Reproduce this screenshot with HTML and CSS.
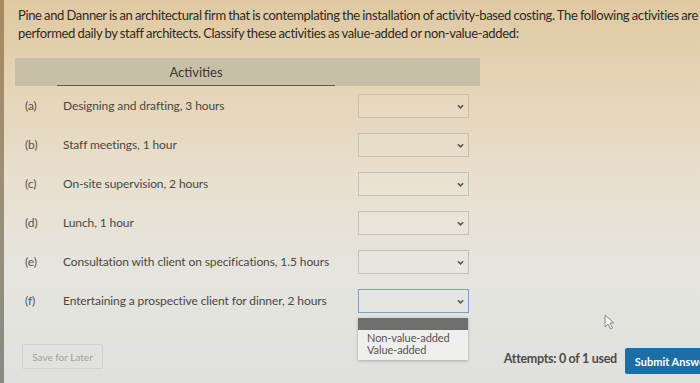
FILE: index.html
```html
<!DOCTYPE html>
<html lang="en">
<head>
    <meta charset="UTF-8">
    <meta name="viewport" content="width=device-width, initial-scale=1.0">
    <title>Activity-based costing</title>
    <link rel="stylesheet" href="styles.css">
</head>
<body>
    <div class="page">
        <p class="question">Pine and Danner is an architectural firm that is contemplating the installation of activity-based costing. The following activities are performed daily by staff architects. Classify these activities as value-added or non-value-added:</p>

        <div class="activities">
            <div class="head">
                <span class="head-title">Activities</span>
            </div>
            <div class="row">
                <span class="tag">(a)</span>
                <span class="desc">Designing and drafting, 3 hours</span>
                <div class="pick"><svg viewBox="0 0 8 5" class="chev"><polyline points="1,1 4,4 7,1"/></svg></div>
            </div>
            <div class="row">
                <span class="tag">(b)</span>
                <span class="desc">Staff meetings, 1 hour</span>
                <div class="pick"><svg viewBox="0 0 8 5" class="chev"><polyline points="1,1 4,4 7,1"/></svg></div>
            </div>
            <div class="row">
                <span class="tag">(c)</span>
                <span class="desc">On-site supervision, 2 hours</span>
                <div class="pick"><svg viewBox="0 0 8 5" class="chev"><polyline points="1,1 4,4 7,1"/></svg></div>
            </div>
            <div class="row">
                <span class="tag">(d)</span>
                <span class="desc">Lunch, 1 hour</span>
                <div class="pick"><svg viewBox="0 0 8 5" class="chev"><polyline points="1,1 4,4 7,1"/></svg></div>
            </div>
            <div class="row">
                <span class="tag">(e)</span>
                <span class="desc">Consultation with client on specifications, 1.5 hours</span>
                <div class="pick"><svg viewBox="0 0 8 5" class="chev"><polyline points="1,1 4,4 7,1"/></svg></div>
            </div>
            <div class="row">
                <span class="tag">(f)</span>
                <span class="desc">Entertaining a prospective client for dinner, 2 hours</span>
                <div class="pick open">
                    <svg viewBox="0 0 8 5" class="chev"><polyline points="1,1 4,4 7,1"/></svg>
                    <ul class="menu">
                        <li class="menu-blank"></li>
                        <li>Non-value-added</li>
                        <li>Value-added</li>
                    </ul>
                </div>
            </div>
        </div>

        <div class="footer">
            <button class="save-btn">Save for Later</button>
            <svg class="cursor" viewBox="0 0 11 16"><path d="M1 1 L1 13 L4 10 L6.5 15 L8.5 14 L6 9 L10 9 Z"/></svg>
            <span class="attempts">Attempts: 0 of 1 used</span>
            <button class="submit-btn">Submit Answer</button>
        </div>
    </div>
</body>
</html>
```

FILE: styles.css
```css
html, body {
    margin: 0;
    height: 100%;
}
body {
    font-family: Lato, "Open Sans", sans-serif;
    overflow: hidden;
    background: linear-gradient(180deg, #e0c9a2 0%, #e6d5b8 25%, #e8e0cf 48%, #e5e4df 72%, #e0e1dd 100%);
}
.page {
    height: 383px;
    border-left: 4px solid;
    border-image: linear-gradient(180deg, #a88a5e, #9c8f78 50%, #858b84) 1;
    box-sizing: border-box;
}
.question {
    margin: 0;
    padding: 6px 0 0 14px;
    font-size: 13px;
    line-height: 18px;
    letter-spacing: -0.35px;
    word-spacing: -0.5px;
    color: #2e2a24;
    width: 700px;
}
.activities {
    margin: 16px 0 0 11px;
    width: 465px;
}
.head {
    height: 28px;
    background: #c8c0a6;
    display: flex;
    align-items: flex-end;
}
.head-title {
    margin-left: 42px;
    width: 278px;
    height: 27px;
    line-height: 26px;
    text-align: center;
    font-size: 13px;
    color: #3a3732;
    border-bottom: 1px solid #5c5a52;
    box-sizing: border-box;
}
.row {
    height: 39px;
    display: grid;
    grid-template-columns: 38px 295px 111px;
    align-items: center;
    padding-left: 10px;
    font-size: 12px;
    letter-spacing: -0.1px;
    color: #4a4843;
}
.tag {
    color: #55534d;
}
.pick {
    position: relative;
    height: 24px;
    border: 1px solid #c4c2b8;
    box-sizing: border-box;
    background: rgba(255, 255, 255, 0.08);
}
.pick.open {
    border-color: #7ea3c2;
}
.chev {
    position: absolute;
    right: 4px;
    top: 9px;
    width: 7px;
    height: 5px;
    fill: none;
    stroke: #555;
    stroke-width: 1.8;
}
.menu {
    position: absolute;
    left: -1px;
    top: 28px;
    width: 110px;
    margin: 0;
    padding: 0 0 4px;
    list-style: none;
    background: #eeeeec;
    box-shadow: 0 1px 3px rgba(0, 0, 0, 0.25);
    font-size: 11px;
    line-height: 12px;
    color: #55544f;
    z-index: 2;
}
.menu li {
    padding-left: 9px;
}
.menu .menu-blank {
    height: 12px;
    background: #6e6e6c;
    margin-bottom: 2px;
}
.footer {
    position: relative;
    display: flex;
    align-items: flex-start;
}
.save-btn {
    margin: 24px 0 0 18px;
    width: 81px;
    height: 25px;
    padding: 0;
    font-family: Lato, sans-serif;
    font-size: 10px;
    color: #a3a3a0;
    background: transparent;
    border: 1px solid #d2d2ce;
    border-radius: 2px;
}
.cursor {
    position: absolute;
    left: 600px;
    top: -6px;
    width: 11px;
    height: 16px;
    fill: #f4f4f2;
    stroke: #8a8a88;
    stroke-width: 1;
}
.attempts {
    margin: 31px 0 0 auto;
    font-size: 12.5px;
    font-weight: bold;
    color: #4c4c4a;
    letter-spacing: -0.3px;
    white-space: nowrap;
}
.submit-btn {
    margin: 28px -19px 0 8px;
    height: 26px;
    padding: 0 10px;
    font-family: Lato, sans-serif;
    font-size: 11px;
    font-weight: bold;
    color: #fff;
    background: #1b6ea6;
    border: none;
    border-radius: 2px;
    white-space: nowrap;
    flex-shrink: 0;
}
```
